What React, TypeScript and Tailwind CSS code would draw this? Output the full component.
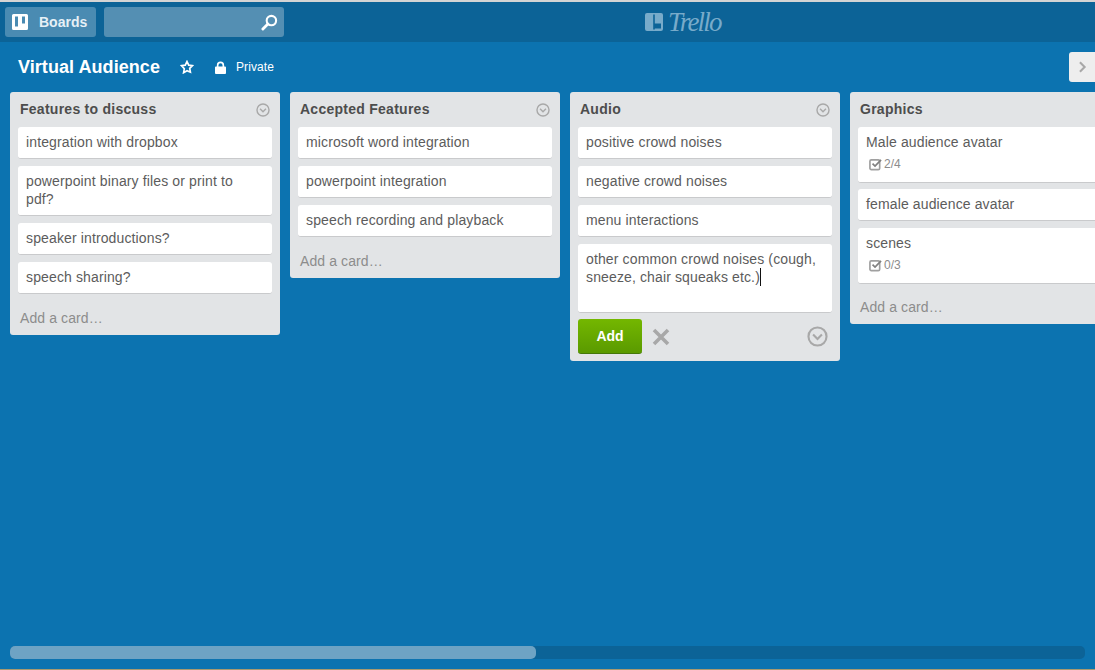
type Card = { text: string; badge?: string };

const lists: { title: string; menu: boolean; cards: Card[] }[] = [
  {
    title: "Features to discuss",
    menu: true,
    cards: [
      { text: "integration with dropbox" },
      { text: "powerpoint binary files or print to\npdf?" },
      { text: "speaker introductions?" },
      { text: "speech sharing?" },
    ],
  },
  {
    title: "Accepted Features",
    menu: true,
    cards: [
      { text: "microsoft word integration" },
      { text: "powerpoint integration" },
      { text: "speech recording and playback" },
    ],
  },
];

const audio = ["positive crowd noises", "negative crowd noises", "menu interactions"];

const graphics: Card[] = [
  { text: "Male audience avatar", badge: "2/4" },
  { text: "female audience avatar" },
  { text: "scenes", badge: "0/3" },
];

function MenuCircle({ size }: { size: "sm" | "lg" }) {
  return (
    <svg viewBox="0 0 20 20" className={size === "sm" ? "h-[14px] w-[14px]" : "h-[21px] w-[21px]"}>
      <circle cx="10" cy="10" r="8.6" fill="none" stroke="#a8a8a8" strokeWidth="2" />
      <path d="M5.800 8.200 10 12.400l4.200-4.200" fill="none" stroke="#a8a8a8" strokeWidth="2" />
    </svg>
  );
}

function CardRow({ card }: { card: Card }) {
  return (
    <div
      className={
        card.badge
          ? "mx-2 mb-[6px] rounded-[3px] border-b border-[#c9cacc] bg-white px-2 pt-[6px] pb-[7px] text-[14px] leading-[18px] tracking-[0.13px] whitespace-pre-line text-[#5c5c5c]"
          : "mx-2 mb-[7px] rounded-[3px] border-b border-[#c9cacc] bg-white px-2 pt-[6px] pb-[7px] text-[14px] leading-[18px] tracking-[0.13px] whitespace-pre-line text-[#5c5c5c]"
      }
    >
      <div>{card.text}</div>
      {card.badge && (
        <div className="mt-[4px] mb-[2px] flex h-[18px] items-center pl-[3px] text-[12px] tracking-normal text-[#8c8c8c]">
          <svg viewBox="0 0 14 14" className="mr-[2px] h-[13px] w-[13px]">
            <rect x="1" y="2" width="10.500" height="10.500" rx="1.500" fill="none" stroke="#a0a0a0" strokeWidth="1.800" />
            <path d="M3.800 6l2.700 2.700L13 2" fill="none" stroke="#808080" strokeWidth="1.800" />
          </svg>
          {card.badge}
        </div>
      )}
    </div>
  );
}

function ListHead({ title, menu }: { title: string; menu: boolean }) {
  return (
    <div className="flex h-[35px] items-center justify-between px-[10px] text-[14px] font-bold tracking-[0.26px] text-[#4d4d4d]">
      <span>{title}</span>
      {menu && <MenuCircle size="sm" />}
    </div>
  );
}

function AddCard() {
  return <div className="px-[10px] py-[8px] text-[14px] leading-[18px] tracking-[0.1px] text-[#8c8c8c]">Add a card…</div>;
}

export default function App() {
  return (
    <div className="flex h-[670px] w-[1095px] flex-col overflow-hidden bg-[#0c73b0] font-['Liberation_Sans',Arial,sans-serif]">
      <div className="h-[2px] shrink-0 bg-[#d4d4d4]" />

      {/* top bar */}
      <div className="relative flex h-[40px] shrink-0 items-center gap-[8px] bg-[#0c6397] pl-[5px]">
        <div className="flex h-[30px] w-[91px] items-center rounded-[3px] bg-[#4a8bb2] pl-[7px] text-[14px] font-bold">
          <svg viewBox="0 0 16 16" className="h-[16px] w-[16px]">
            <path
              fillRule="evenodd"
              fill="#fff"
              d="M1.500 0h13A1.500 1.500 0 0 1 16 1.500v13a1.500 1.500 0 0 1-1.500 1.500h-13A1.500 1.500 0 0 1 0 14.500v-13A1.500 1.500 0 0 1 1.500 0zM3 2.500v10h3v-10zM10 2.500v7h3v-7z"
            />
          </svg>
          <span className="ml-[11px] text-[#e6f0f6]">Boards</span>
        </div>
        <div className="flex h-[30px] w-[180px] items-center justify-end rounded-[3px] bg-[#548fb3] pr-[6px]">
          <svg viewBox="0 0 18 18" className="h-[17px] w-[17px]">
            <circle cx="11" cy="7" r="5" fill="none" stroke="#fff" strokeWidth="2.200" />
            <path d="M7.300 10.700 2 16" fill="none" stroke="#fff" strokeWidth="3" strokeLinecap="round" />
          </svg>
        </div>
        {/* logo */}
        <div className="absolute top-[7px] left-[645px] flex h-[26px] items-center text-[#78abca]">
          <svg viewBox="0 0 18 18" className="h-[18px] w-[18px]">
            <path
              fillRule="evenodd"
              fill="currentColor"
              d="M2 0h14a2 2 0 0 1 2 2v14a2 2 0 0 1-2 2H2a2 2 0 0 1-2-2V2a2 2 0 0 1 2-2zM8.200 1.500v15h1.600v-15zM9.800 10.500v5H16v-5z"
            />
          </svg>
          <span className="ml-[5px] font-['Liberation_Serif',serif] text-[27px] leading-none tracking-[-1.8px] italic">Trello</span>
        </div>
      </div>

      {/* board title */}
      <div className="flex h-[50px] shrink-0 items-center pl-[18px] text-white">
        <span className="text-[18px] font-bold tracking-[0.06px]">Virtual Audience</span>
        <svg viewBox="0 0 14 14" className="ml-[20px] h-[14px] w-[14px]">
          <path
            d="M7 1.500l1.700 3.600 3.800.5-2.800 2.700.7 3.900L7 10.800l-3.400 1.900.7-3.900L1.500 5.600l3.800-.5z"
            fill="none"
            stroke="#fff"
            strokeWidth="1.700"
          />
        </svg>
        <svg viewBox="0 0 12 14" className="ml-[21px] h-[13px] w-[11px]">
          <path
            fill="#fff"
            d="M1 6h1V4.500a4 4 0 0 1 8 0V6h1a1 1 0 0 1 1 1v6a1 1 0 0 1-1 1H1a1 1 0 0 1-1-1V7a1 1 0 0 1 1-1zm2.800 0h4.400V4.500a2.200 2.200 0 0 0-4.400 0z"
          />
        </svg>
        <span className="ml-[10px] text-[12px] tracking-[0.1px]">Private</span>
        <div className="mt-[-1px] ml-auto flex h-[30px] w-[26px] items-center justify-center rounded-l-[3px] bg-[#eeeeee]">
          <svg viewBox="0 0 10 14" className="h-[12px] w-[9px]">
            <path d="M2 1.500 7.500 7 2 12.500" fill="none" stroke="#a8a8a8" strokeWidth="2.400" />
          </svg>
        </div>
      </div>

      {/* lists */}
      <div className="flex min-h-0 flex-1 items-start gap-[10px] pl-[10px]">
        {lists.map((l) => (
          <div key={l.title} className="w-[270px] shrink-0 rounded-[3px] bg-[#e2e4e6]">
            <ListHead title={l.title} menu={l.menu} />
            {l.cards.map((c) => (
              <CardRow key={c.text} card={c} />
            ))}
            <AddCard />
          </div>
        ))}

        <div className="w-[270px] shrink-0 rounded-[3px] bg-[#e2e4e6]">
          <ListHead title="Audio" menu />
          {audio.map((t) => (
            <CardRow key={t} card={{ text: t }} />
          ))}
          <div className="mx-2 h-[69px] rounded-[3px] border-b border-[#c9cacc] bg-white px-2 pt-[6px] text-[14px] leading-[18px] tracking-[0.13px] text-[#5c5c5c]">
            other common crowd noises (cough, sneeze, chair squeaks etc.)
            <span className="inline-block h-[18px] w-px bg-[#111111] align-top" />
          </div>
          <div className="flex items-center pt-[6px] pr-[12px] pb-[7px] pl-2">
            <div className="flex h-[35px] w-[64px] items-center justify-center rounded-[3px] border-b border-[#44780a] bg-gradient-to-b from-[#74b700] to-[#5a9a00] text-[14px] font-bold text-white">
              Add
            </div>
            <svg viewBox="0 0 18 18" className="ml-[10px] h-[18px] w-[18px]">
              <path d="M2 2l14 14M16 2 2 16" fill="none" stroke="#a8a8a8" strokeWidth="3.600" />
            </svg>
            <div className="ml-auto flex">
              <MenuCircle size="lg" />
            </div>
          </div>
        </div>

        <div className="w-[270px] shrink-0 rounded-[3px] bg-[#e2e4e6]">
          <ListHead title="Graphics" menu={false} />
          {graphics.map((c) => (
            <CardRow key={c.text} card={c} />
          ))}
          <AddCard />
        </div>
      </div>

      {/* horizontal scrollbar */}
      <div className="mx-[10px] mb-[10px] h-[13px] shrink-0 rounded-[5px] bg-[#0c6397]">
        <div className="h-full w-[526px] rounded-[5px] bg-[#6ea3c4]" />
      </div>
      <div className="h-px shrink-0 bg-[#a89a70]" />
    </div>
  );
}
